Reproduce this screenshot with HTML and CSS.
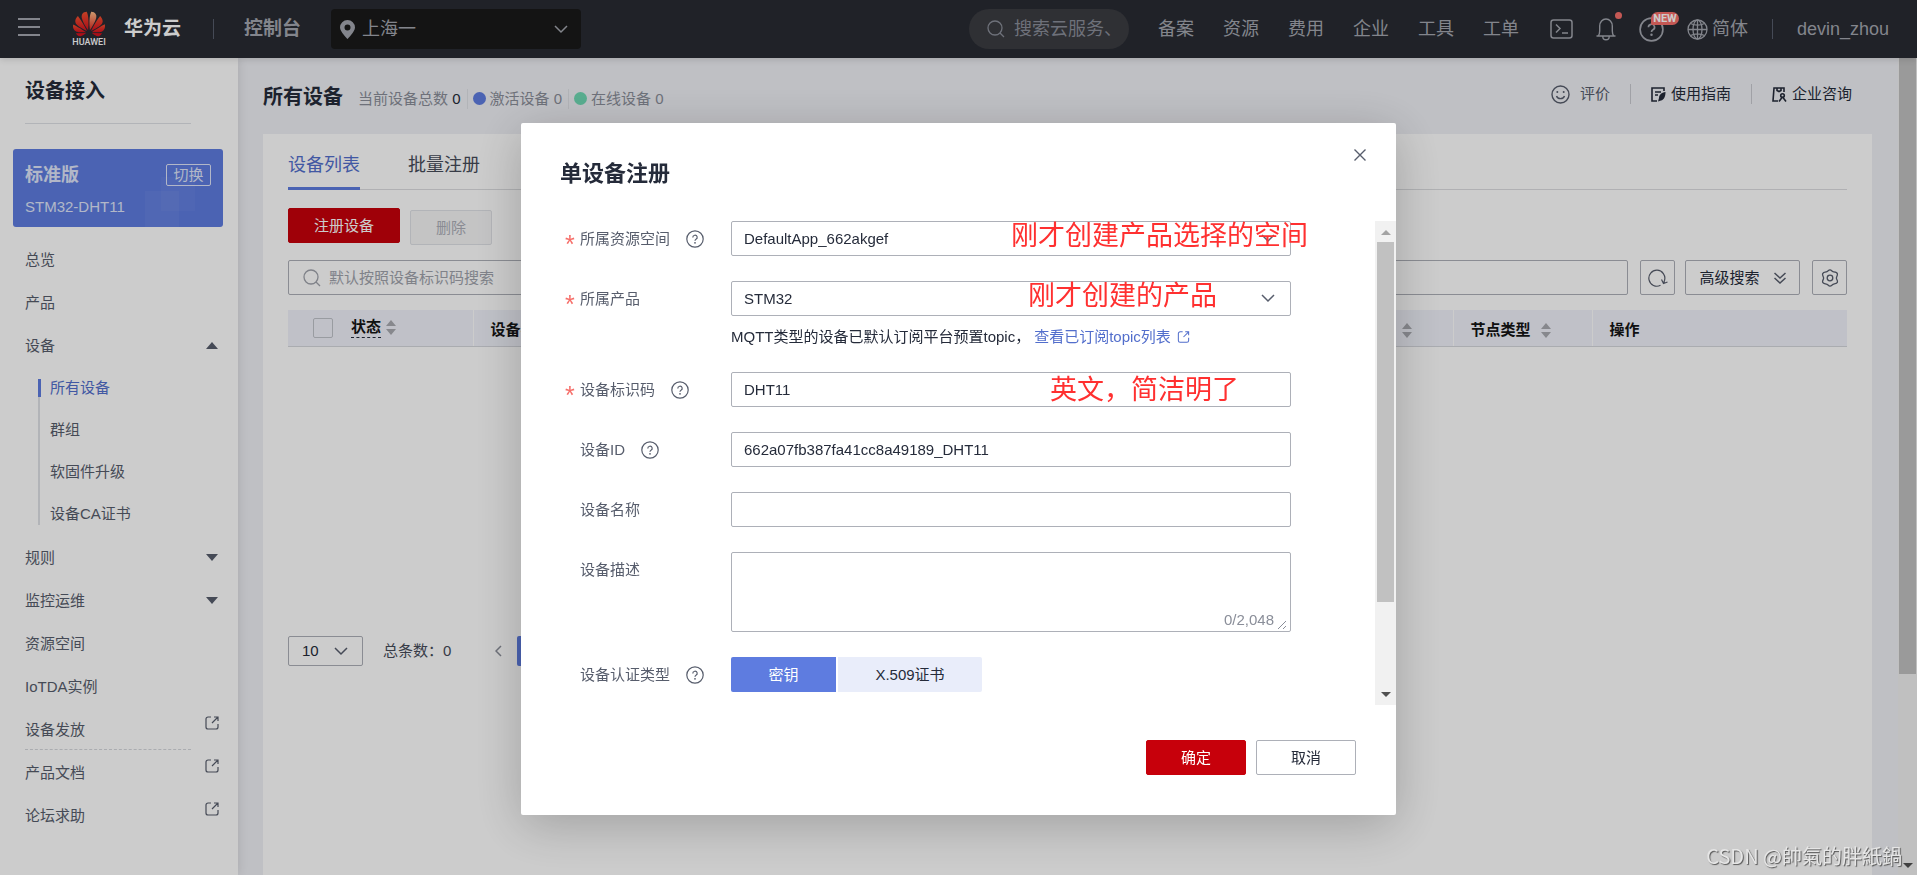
FILE: index.html
```html
<!DOCTYPE html>
<html lang="zh-CN">
<head>
<meta charset="utf-8">
<title>设备接入 - 所有设备</title>
<link rel="stylesheet" href="styles.css">
</head>
<body>
<svg class="defs" aria-hidden="true">
  <symbol id="i-chevron" viewBox="0 0 14 9"><path d="M1 1l6 6 6-6" fill="none" stroke="currentColor" stroke-width="1.5"/></symbol>
  <symbol id="i-search" viewBox="0 0 18 18"><g fill="none" stroke="currentColor" stroke-width="1.3"><circle cx="8" cy="8" r="7"/><path d="M13 13l4 4"/></g></symbol>
  <symbol id="i-help" viewBox="0 0 18 18"><g fill="none" stroke="currentColor" stroke-width="1.2"><circle cx="9" cy="9" r="8.2"/><path d="M6.8 7.4a2.2 2.1 0 1 1 3.2 1.8c-.7.4-1 .7-1 1.6"/></g><circle cx="9" cy="12.8" r=".9" fill="currentColor"/></symbol>
  <symbol id="i-ext" viewBox="0 0 14 14"><path d="M6 1H3a2 2 0 0 0-2 2v8a2 2 0 0 0 2 2h8a2 2 0 0 0 2-2V8M9 1h4v4M13 1L7 7" fill="none" stroke="currentColor" stroke-width="1.2"/></symbol>
  <symbol id="i-sort" viewBox="0 0 10 15"><path d="M5 0l5 6H0zM0 9h10l-5 6z" fill="currentColor"/></symbol>
  <symbol id="i-caret" viewBox="0 0 12 7"><path d="M0 0h12L6 7z" fill="currentColor"/></symbol>
  <symbol id="i-arrow" viewBox="0 0 10 5"><path d="M0 0h10L5 5z" fill="currentColor"/></symbol>
</svg>

<div class="app">
  <header class="topbar">
    <button class="icon-btn menu-btn" aria-label="菜单"><svg width="22" height="18" viewBox="0 0 22 18"><path d="M0 1h22M0 9h22M0 17h22" stroke="currentColor" stroke-width="2"/></svg></button>
    <a class="brand" href="#">
      <span class="logo">
        <svg width="32" height="26" viewBox="0 2.5 24 19" preserveAspectRatio="none">
          <defs><linearGradient id="petal" x1="0" y1="0" x2="0" y2="1"><stop offset="0" stop-color="#f4512f"/><stop offset="1" stop-color="#d4121f"/></linearGradient>
          <linearGradient id="petal-light" x1="0" y1="0" x2="0" y2="1"><stop offset="0" stop-color="#ffc08a"/><stop offset="1" stop-color="#e02a20"/></linearGradient></defs>
          <path fill="url(#petal)" d="M3.67 6.14S1.82 7.91 1.72 9.78v.35c.08 1.51 1.22 2.4 1.22 2.4 1.83 1.79 6.26 4.04 7.3 4.55 0 0 .06.03.1-.01l.02-.04v-.04C7.52 10.8 3.67 6.14 3.67 6.14z"/>
          <path fill="#d4121f" d="M9.65 18.6c-.02-.08-.1-.08-.1-.08l-7.38.26c.8 1.43 2.15 2.53 3.56 2.2.96-.25 3.16-1.78 3.88-2.3.06-.05.04-.09.04-.09z"/>
          <path fill="url(#petal)" d="M9.73 17.82C6.49 15.63.21 12.28.21 12.28c-.15.46-.2.9-.21 1.3v.07c0 1.07.4 1.82.4 1.82.8 1.69 2.34 2.2 2.34 2.2.7.3 1.4.31 1.4.31h5.54c.05 0 .08-.05.08-.05z"/>
          <path fill="url(#petal)" d="M9.06 3.19a3.42 3.42 0 0 0-2.57 3.15v.41c.03.6.16 1.05.16 1.05.66 2.9 3.86 7.65 4.55 8.65.05.05.1.03.1.03a.1.1 0 0 0 .06-.1c1.06-10.6-1.11-13.42-1.11-13.42-.32.02-1.19.23-1.19.23z"/>
          <path fill="url(#petal-light)" d="M17.36 5.46s-.49-1.8-2.44-2.28c0 0-.57-.14-1.17-.22 0 0-2.18 2.81-1.12 13.43.01.07.06.08.06.08.07.03.1-.03.1-.03.72-1.03 3.9-5.76 4.55-8.64 0 0 .36-1.4.02-2.34z"/>
          <path fill="#d4121f" d="M14.44 18.53s-.07 0-.09.05c0 0-.01.07.03.1.7.51 2.85 2 3.88 2.3 0 0 .16.05.43.06h.14c.69-.02 1.9-.37 3-2.26z"/>
          <path fill="url(#petal)" d="M22.27 10.12c.14-2.06-1.94-3.98-1.94-3.98s-3.85 4.66-6.67 10.8c0 0-.03.08.02.13h.1c1.06-.53 5.46-2.77 7.28-4.54 0 0 1.15-.93 1.21-2.41z"/>
          <path fill="url(#petal)" d="M23.79 12.26s-6.28 3.37-9.52 5.55c0 0-.05.04-.03.11 0 0 .03.06.07.06 1.16 0 5.56 0 5.67-.02 0 0 .57-.02 1.27-.29 0 0 1.56-.5 2.37-2.27 0 0 .73-1.45.17-3.14z"/>
        </svg>
        <span class="logo-word">HUAWEI</span>
      </span>
      <span class="brand-name">华为云</span>
    </a>
    <span class="bar-rule rule-brand"></span>
    <a class="console" href="#">控制台</a>
    <button class="region">
      <svg width="15" height="19" viewBox="0 0 15 19"><path fill-rule="evenodd" fill="currentColor" d="M7.500 0a7.500 7.500 0 0 0-7.500 7.500C0 11.500 7.500 19 7.500 19S15 11.500 15 7.500A7.500 7.500 0 0 0 7.500 0zm0 4.500a3 3 0 1 1 0 6 3 3 0 0 1 0-6z"/></svg>
      <span class="region-name">上海一</span>
      <svg width="14" height="9"><use href="#i-chevron"/></svg>
    </button>
    <label class="top-search">
      <svg width="18" height="18"><use href="#i-search"/></svg>
      <input type="text" placeholder="搜索云服务、" aria-label="搜索云服务">
    </label>
    <nav class="top-nav">
      <a href="#">备案</a><a href="#">资源</a><a href="#">费用</a><a href="#">企业</a><a href="#">工具</a><a href="#">工单</a>
    </nav>
    <div class="top-tools">
      <button class="icon-btn" aria-label="命令行"><svg width="23" height="20" viewBox="0 0 23 20"><g fill="none" stroke="currentColor" stroke-width="1.5"><rect x="1" y="1" width="21" height="18" rx="2.500"/><path d="M6 5.500l4 4-4 4M12 14h6"/></g></svg></button>
      <button class="icon-btn" aria-label="消息"><svg width="20" height="24" viewBox="0 0 20 24"><path d="M.5 19h19M2.200 19c1.200-1.500 1.500-3 1.500-5V9a6.300 7 0 0 1 12.600 0v5c0 2 .3 3.500 1.500 5M6.800 19.500a3.200 3.300 0 0 0 6.400 0" fill="none" stroke="currentColor" stroke-width="1.400"/></svg><span class="dot-badge"></span></button>
      <button class="icon-btn" aria-label="帮助"><svg width="25" height="25"><use href="#i-help"/></svg><span class="new-badge">NEW</span></button>
      <button class="lang"><svg width="21" height="21" viewBox="0 0 21 21"><g fill="none" stroke="currentColor" stroke-width="1.300"><circle cx="10.500" cy="10.500" r="9.500"/><ellipse cx="10.500" cy="10.500" rx="4.500" ry="9.500"/><path d="M1 10.500h19M10.500 1v19M3.500 4.500c4 2 10 2 14 0M3.500 16.500c4-2 10-2 14 0"/></g></svg>简体</button>
    </div>
    <span class="bar-rule rule-user"></span>
    <a class="user" href="#">devin_zhou</a>
  </header>

  <div class="body-row">
    <aside class="sidebar">
      <h2 class="side-title">设备接入</h2>
      <div class="edition">
        <div class="edition-top"><strong>标准版</strong><button class="switch">切换</button></div>
        <span class="edition-name">STM32-DHT11</span>
      </div>
      <nav class="side-nav">
        <a href="#">总览</a>
        <a href="#">产品</a>
        <a href="#">设备<svg class="flip" width="12" height="7"><use href="#i-caret"/></svg></a>
        <div class="sub-nav">
          <a class="current" href="#">所有设备</a>
          <a href="#">群组</a>
          <a href="#">软固件升级</a>
          <a href="#">设备CA证书</a>
        </div>
        <a href="#">规则<svg width="12" height="7"><use href="#i-caret"/></svg></a>
        <a href="#">监控运维<svg width="12" height="7"><use href="#i-caret"/></svg></a>
        <a href="#">资源空间</a>
        <a href="#">IoTDA实例</a>
        <a class="ext" href="#">设备发放<svg width="14" height="14"><use href="#i-ext"/></svg></a>
        <a class="ext after-rule" href="#">产品文档<svg width="14" height="14"><use href="#i-ext"/></svg></a>
        <a class="ext" href="#">论坛求助<svg width="14" height="14"><use href="#i-ext"/></svg></a>
      </nav>
    </aside>

    <main class="main">
      <div class="page-head">
        <h1>所有设备</h1>
        <div class="stats">
          <span>当前设备总数 <b>0</b></span>
          <span class="stat"><i class="dot active"></i>激活设备 0</span>
          <span class="stat"><i class="dot online"></i>在线设备 0</span>
        </div>
        <div class="head-links">
          <a class="rate" href="#"><svg width="19" height="19" viewBox="0 0 19 19"><g fill="none" stroke="currentColor" stroke-width="1.400"><circle cx="9.500" cy="9.500" r="8.500"/><path d="M5.500 11c1 3.500 7 3.500 8 0"/></g><circle cx="6.300" cy="7" r="1" fill="currentColor"/><circle cx="12.700" cy="7" r="1" fill="currentColor"/></svg>评价</a>
          <a href="#"><svg width="15" height="15" viewBox="0 0 15 15"><path d="M13 4V1H1v13h5M4 5h6M4 8h3" fill="none" stroke="currentColor" stroke-width="1.600"/><path d="M14.500 5c-4 .5-6.500 3-6.500 6l-1 3.500 3-1c3-.5 4.500-4 4.500-8.500z" fill="currentColor"/></svg>使用指南</a>
          <a href="#"><svg width="15" height="15" viewBox="0 0 15 15"><g fill="none" stroke="currentColor" stroke-width="1.600"><path d="M12 5V1H2L1 14h5M5 1.500v2l2 1 2-1v-2"/><circle cx="10.500" cy="8.500" r="1.800"/><path d="M7 14.500l3-4h1l3 4"/></g></svg>企业咨询</a>
        </div>
      </div>

      <section class="panel">
        <nav class="tabs"><a class="selected" href="#">设备列表</a><a href="#">批量注册</a></nav>
        <div class="actions"><button class="btn primary register">注册设备</button><button class="btn delete" disabled>删除</button></div>
        <div class="filters">
          <label class="filter-box"><svg width="18" height="18"><use href="#i-search"/></svg><input type="text" placeholder="默认按照设备标识码搜索" aria-label="搜索设备"></label>
          <button class="btn square" aria-label="刷新"><svg width="20" height="18" viewBox="0 0 20 18"><path d="M12.500 16.300A8 8 0 1 1 16.500 11.500L15.500 14.500M13.500 10.500l2 4 4-1.500" fill="none" stroke="currentColor" stroke-width="1.200"/></svg></button>
          <button class="btn advanced">高级搜索<svg width="12" height="12" viewBox="0 0 12 12"><path d="M.5 1L6 6l5.500-5M.5 6L6 11l5.500-5" fill="none" stroke="currentColor" stroke-width="1.500"/></svg></button>
          <button class="btn square" aria-label="设置"><svg width="18" height="18" viewBox="0 0 18 18"><g fill="none" stroke="currentColor" stroke-width="1.300"><path d="M9 .9c1.600 0 2.200 1.900 3.700 2s3.400.2 3.700 1.900-1 2.700-1 4.200 1.500 2.700 1 4.200-2.400 1.600-3.700 1.900S10.600 17.100 9 17.100s-2.200-1.800-3.700-2-3.300-.4-3.700-1.900 1-2.700 1-4.200-1.500-2.700-1-4.200 2.400-1.700 3.700-1.900S7.400.9 9 .9z"/><circle cx="9" cy="9" r="2.800"/></g></svg></button>
        </div>
        <table class="devices">
          <colgroup><col class="c-state"><col><col><col><col class="c-mid"><col class="c-mid"><col class="c-ops"></colgroup>
          <thead><tr>
            <th class="first"><div class="th"><input type="checkbox" aria-label="全选"><span class="hinted">状态</span><svg width="10" height="15"><use href="#i-sort"/></svg></div></th>
            <th>设备名称</th>
            <th></th>
            <th></th>
            <th><div class="th">所属产品<svg width="10" height="15"><use href="#i-sort"/></svg></div></th>
            <th><div class="th">节点类型<svg width="10" height="15"><use href="#i-sort"/></svg></div></th>
            <th>操作</th>
          </tr></thead>
        </table>
        <div class="pager">
          <div class="select-wrap page-size"><select aria-label="每页条数"><option>10</option></select><svg width="14" height="9"><use href="#i-chevron"/></svg></div>
          <span class="total">总条数：0</span>
          <button class="prev" aria-label="上一页"><svg width="7" height="12" viewBox="0 0 7 12"><path d="M6 1L1 6l5 5" fill="none" stroke="currentColor" stroke-width="1.500"/></svg></button>
          <button class="page-no" aria-label="第1页">1</button>
        </div>
      </section>
    </main>

    <div class="scrollbar page-scroll" aria-hidden="true">
      <div class="thumb" style="height:76%"></div>
      <svg width="10" height="5"><use href="#i-arrow"/></svg>
    </div>
  </div>
</div>

<div class="backdrop">
  <section class="dialog" role="dialog" aria-modal="true" aria-labelledby="dlg-title">
    <header class="dialog-head">
      <h2 id="dlg-title">单设备注册</h2>
      <button class="close" aria-label="关闭"><svg width="12" height="12" viewBox="0 0 12 12"><path d="M.5.500l11 11M11.500.500l-11 11" stroke="currentColor" stroke-width="1.400"/></svg></button>
    </header>
    <div class="dialog-body">
      <form class="form">
        <div class="row">
          <div class="label"><span class="req">*</span><label for="f-space">所属资源空间</label><svg width="18" height="18"><use href="#i-help"/></svg></div>
          <div class="field"><div class="select-wrap"><select id="f-space"><option>DefaultApp_662akgef</option></select><svg width="14" height="9"><use href="#i-chevron"/></svg></div><span class="note note-space">刚才创建产品选择的空间</span></div>
        </div>
        <div class="row">
          <div class="label"><span class="req">*</span><label for="f-product">所属产品</label></div>
          <div class="field"><div class="select-wrap"><select id="f-product"><option>STM32</option></select><svg width="14" height="9"><use href="#i-chevron"/></svg></div><span class="note note-product">刚才创建的产品</span>
            <p class="hint">MQTT类型的设备已默认订阅平台预置topic， <a href="#">查看已订阅topic列表<svg width="13" height="12"><use href="#i-ext"/></svg></a></p></div>
        </div>
        <div class="row">
          <div class="label"><span class="req">*</span><label for="f-code">设备标识码</label><svg width="18" height="18"><use href="#i-help"/></svg></div>
          <div class="field"><input id="f-code" type="text" value="DHT11"><span class="note note-code">英文，简洁明了</span></div>
        </div>
        <div class="row">
          <div class="label"><span class="req"></span><label for="f-id">设备ID</label><svg width="18" height="18"><use href="#i-help"/></svg></div>
          <div class="field"><input id="f-id" type="text" value="662a07fb387fa41cc8a49189_DHT11"></div>
        </div>
        <div class="row">
          <div class="label"><span class="req"></span><label for="f-name">设备名称</label></div>
          <div class="field"><input id="f-name" type="text"></div>
        </div>
        <div class="row">
          <div class="label"><span class="req"></span><label for="f-desc">设备描述</label></div>
          <div class="field"><textarea id="f-desc"></textarea><span class="counter">0/2,048<svg width="10" height="10" viewBox="0 0 10 10"><path d="M1 9l8-8M6 9l3-3" stroke="currentColor" fill="none"/></svg></span></div>
        </div>
        <div class="row">
          <div class="label"><span class="req"></span><span>设备认证类型</span><svg width="18" height="18"><use href="#i-help"/></svg></div>
          <div class="field segments"><button type="button" class="on">密钥</button><button type="button" class="off">X.509证书</button></div>
        </div>
      </form>
      <div class="scrollbar dialog-scroll" aria-hidden="true">
        <svg class="flip" width="10" height="5"><use href="#i-arrow"/></svg>
        <div class="thumb" style="height:77%"></div>
        <svg width="10" height="5"><use href="#i-arrow"/></svg>
      </div>
    </div>
    <footer class="dialog-foot"><button class="btn primary">确定</button><button class="btn">取消</button></footer>
  </section>
</div>
<span class="watermark">CSDN @帥氣的胖紙鍋</span>
</body>
</html>
```

FILE: styles.css
```css
* { box-sizing: border-box; }

:root {
  --ink: #252b3a;
  --text: #575d6c;
  --line: #adb0b8;
  --rule: #dfe1e6;
  --blue: #5e7ce0;
  --red: #c7000b;
}

body {
  margin: 0;
  overflow: hidden;
  color: var(--ink);
  font: 15px/20px "Liberation Sans", "Noto Sans CJK SC", sans-serif;
}

h1, h2, p { margin: 0; }
a { color: inherit; text-decoration: none; }
svg { display: block; flex: none; }
button, input, select, textarea { font: inherit; color: inherit; }
button { margin: 0; padding: 0; border: 0; background: none; white-space: nowrap; }
input::placeholder { color: inherit; opacity: 1; }
.defs { position: absolute; width: 0; height: 0; }
.flip { transform: rotate(180deg); }

.app { display: flex; flex-direction: column; height: 100vh; }

/* Top bar */
.topbar {
  display: flex;
  align-items: center;
  flex: none;
  height: 58px;
  padding: 0 28px 0 18px;
  background: #282b33;
  color: #a4a7af;
  font-size: 18px;
  line-height: 24px;
  white-space: nowrap;
  box-shadow: 0 2px 6px rgba(0, 0, 0, .12);
  z-index: 2;
}
.topbar > * { flex: none; }
.icon-btn { position: relative; display: flex; }
.menu-btn { margin-right: 33px; padding-bottom: 4px; }
.brand { display: flex; align-items: center; gap: 19px; color: #fff; }
.logo { display: flex; flex-direction: column; align-items: center; width: 32px; }
.logo-word { font: 500 9px/10px Roboto, sans-serif; }
.brand-name { font-size: 19px; font-weight: bold; }
.bar-rule { width: 1px; height: 20px; background: #575d6c; }
.rule-brand { margin: 0 30px 0 32px; }
.console { font-size: 19px; font-weight: bold; }
.region {
  display: flex;
  align-items: center;
  width: 250px;
  height: 40px;
  margin-left: 30px;
  padding: 0 13px 0 9px;
  border-radius: 4px;
  background: #191919;
}
.region-name { flex: 1; padding-left: 7px; text-align: left; }
.top-search {
  display: flex;
  align-items: center;
  gap: 9px;
  width: 160px;
  height: 40px;
  margin-left: auto;
  padding: 0 18px;
  border-radius: 20px;
  background: #3b3c41;
  color: #8a8e99;
}
.top-search input { flex: 1; min-width: 0; padding: 0; border: 0; outline: 0; background: none; }
.top-nav { display: flex; gap: 29px; margin-left: 29px; }
.top-tools { display: flex; align-items: center; gap: 23px; margin-left: 31px; }
.lang { display: flex; align-items: center; gap: 4px; }
.dot-badge { position: absolute; top: -5px; right: -6px; width: 7px; height: 7px; border-radius: 50%; background: #f66f6a; }
.new-badge {
  position: absolute;
  top: -5px;
  left: 12px;
  width: 28px;
  border-radius: 7px 7px 7px 2px;
  background: #f66f6a;
  color: #fff;
  font: 700 11px/13px Roboto, sans-serif;
  text-align: center;
}
.rule-user { margin: 0 24px 0 24px; }

.body-row { display: flex; flex: 1; min-height: 0; background: #eff0f5; }

/* Sidebar */
.sidebar { flex: none; width: 238px; padding: 21px 15px 0 13px; background: #fff; box-shadow: 0 0 10px rgba(0, 0, 0, .12); }
.side-title { margin: 0 32px 25px 12px; padding-bottom: 19px; border-bottom: 1px solid var(--rule); font-size: 20px; line-height: 25px; }
.edition {
  display: flex;
  flex-direction: column;
  gap: 11px;
  height: 78px;
  padding: 15px 12px 0;
  border-radius: 3px;
  background:
    linear-gradient(rgba(255, 255, 255, .04), rgba(255, 255, 255, .04)) 132px 42px / 34px 36px no-repeat,
    linear-gradient(rgba(255, 255, 255, .03), rgba(255, 255, 255, .03)) 148px 28px / 34px 34px no-repeat,
    var(--blue);
  color: #dfe5fa;
}
.edition-top { display: flex; justify-content: space-between; align-items: center; font-size: 18px; line-height: 22px; }
.switch { width: 45px; height: 22px; border: 1px solid #dfe5fa; border-radius: 2px; font-size: 15px; line-height: 20px; }
.side-nav { display: flex; flex-direction: column; margin-top: 11px; padding: 0 4px 0 12px; color: var(--text); }
.side-nav > a { position: relative; display: flex; align-items: center; justify-content: space-between; height: 43px; }
.side-nav > a svg { margin-right: 1px; }
.side-nav > .ext svg { margin: 0 0 14px; }
.side-nav > .after-rule::before {
  content: "";
  position: absolute;
  top: -2px;
  left: 0;
  right: 28px;
  border-top: 1px dashed #d5d7dc;
}
.sub-nav { display: flex; flex-direction: column; margin-left: 13px; padding-bottom: 1px; background: linear-gradient(var(--rule), var(--rule)) 0 12px / 2px 146px no-repeat; }
.sub-nav a { display: flex; align-items: center; height: 42px; padding-left: 12px; }
.sub-nav .current { background: linear-gradient(var(--blue), var(--blue)) 0 12px / 3px 18px no-repeat; color: #526ecc; }

/* Page head */
.main { flex: 1; min-width: 0; display: flex; flex-direction: column; padding: 0 26px 0 25px; }
.page-head { display: flex; align-items: center; flex: none; height: 76px; padding-top: 2px; }
.page-head h1 { font-size: 20px; line-height: 26px; }
.stats { display: flex; margin: 3px 0 0 15px; color: #8a8e99; }
.stats b { color: var(--ink); font-weight: normal; }
.stat { display: flex; align-items: center; gap: 4px; margin-left: 6px; padding-left: 5px; border-left: 1px solid var(--rule); }
.dot { width: 13px; height: 13px; border-radius: 50%; }
.dot.active { background: var(--blue); }
.dot.online { background: #6fd9b4; }
.head-links { display: flex; margin: 0 20px 6px auto; }
.head-links a { display: flex; align-items: center; gap: 5px; }
.head-links a + a { margin-left: 20px; padding-left: 20px; border-left: 1px solid #c8cad0; }
.head-links .rate { gap: 10px; color: var(--text); }

/* Panel */
.panel { flex: 1; padding: 0 25px; background: #fff; }
.tabs { display: flex; gap: 48px; height: 56px; border-bottom: 1px solid #dcdde0; font-size: 18px; line-height: 24px; color: #464c59; }
.tabs a { height: 56px; padding-top: 19px; }
.tabs .selected { border-bottom: 3px solid var(--blue); color: #526ecc; }
.actions { display: flex; align-items: flex-start; gap: 10px; margin-top: 18px; }
.btn {
  display: flex;
  align-items: center;
  justify-content: center;
  width: 100px;
  height: 35px;
  border: 1px solid var(--line);
  border-radius: 2px;
  line-height: 20px;
}
.btn.primary { border-color: var(--red); background: var(--red); color: #fff; }
.btn.register { width: 112px; }
.btn.delete { width: 82px; margin-top: 2px; border-color: var(--rule); background: #f5f5f6; color: #adb0b8; }
.filters { display: flex; gap: 12px; margin-top: 15px; }
.filter-box { display: flex; align-items: center; gap: 8px; flex: 1; height: 35px; padding: 0 14px; border: 1px solid var(--line); border-radius: 2px; color: #a0a3ac; }
.filter-box input { flex: 1; min-width: 0; padding: 0; border: 0; outline: 0; background: none; }
.btn.square { width: 35px; color: var(--text); }
.btn.advanced { width: 115px; gap: 14px; margin-left: -2px; }
.btn.advanced svg { color: var(--text); }

.devices { width: 100%; margin-top: 15px; border-collapse: collapse; table-layout: fixed; }
.devices th { height: 36px; padding: 5px 0 0 17px; border-bottom: 1px solid #d5d7dd; border-left: 1px solid #fff; background: #f0f2fa; color: #151515; text-align: left; line-height: 20px; }
.devices th.first { padding: 0 0 0 25px; border-left: 0; }
.th { display: flex; align-items: center; gap: 10px; }
.first .th { gap: 5px; }
.th svg { color: #a9abb1; }
.th input { appearance: none; width: 20px; height: 20px; margin: 0 13px 0 0; border: 1px solid #c0c3ca; border-radius: 2px; background: none; }
.hinted { border-bottom: 1px dashed #252b3a; }
.c-state { width: 185px; }
.c-mid { width: 139px; }
.c-ops { width: 255px; }

.pager { display: flex; align-items: center; margin-top: 289px; }
.total { margin-left: 20px; color: #464c59; }
.prev { margin-left: 44px; color: #8a8e99; }
.page-no { width: 30px; height: 30px; margin-left: 15px; border-radius: 2px; background: var(--blue); color: #fff; }

.select-wrap { position: relative; }
.select-wrap select { appearance: none; display: block; width: 100%; height: 35px; padding: 0 12px; border: 1px solid var(--line); border-radius: 2px; background: none; }
.select-wrap svg { position: absolute; top: 13px; right: 16px; color: var(--text); pointer-events: none; }
.page-size { width: 75px; }
.page-size select { height: 30px; padding-left: 13px; }
.page-size svg { top: 11px; right: 15px; }

/* Scrollbars */
.scrollbar { display: flex; flex-direction: column; align-items: center; flex: none; background: #f1f1f1; color: #505050; }
.thumb { flex: none; width: 17px; background: #c1c1c1; }
.page-scroll { width: 19px; justify-content: space-between; padding-bottom: 7px; }
.dialog-scroll { width: 21px; padding: 9px 0 8px; }
.dialog-scroll .thumb { margin: 7px 0 auto; }
.dialog-scroll .flip { color: #a3a3a3; }

/* Dialog */
.backdrop { position: fixed; inset: 0; display: flex; align-items: flex-start; justify-content: center; padding-top: 123px; background: rgba(0, 0, 0, .2); z-index: 10; }
.dialog { width: 875px; max-width: 100%; border-radius: 2px; background: #fff; box-shadow: 0 10px 50px rgba(0, 0, 0, .22); }
.dialog-head { display: flex; justify-content: space-between; align-items: flex-start; padding: 0 30px 0 39px; }
.dialog-head h2 { padding: 36px 0 32px; font-size: 22px; line-height: 30px; }
.close { margin-top: 26px; color: var(--text); }
.dialog-body { display: flex; justify-content: space-between; height: calc(100vh - 391px); overflow: hidden; }
.form { display: flex; flex-direction: column; gap: 25px; flex: 1; padding: 0 84px 0 39px; }
.row { display: flex; align-items: flex-start; }
.label { display: flex; align-items: center; flex: none; width: 171px; height: 35px; padding-left: 5px; color: var(--text); }
.label svg { margin-left: 16px; }
.req { width: 15px; padding-top: 11px; color: #f66f6a; font-size: 25px; line-height: 25px; }
.field { position: relative; flex: 1; min-width: 0; }
.field > input, .field textarea { display: block; width: 100%; height: 35px; padding: 0 12px; border: 1px solid var(--line); border-radius: 2px; outline: 0; background: none; }
.field textarea { height: 80px; resize: none; }
.counter { position: absolute; right: 4px; bottom: 2px; display: flex; align-items: flex-end; gap: 3px; color: #8a8e99; }
.hint { display: flex; gap: 4px; height: 31px; padding-top: 11px; white-space: nowrap; }
.hint a { display: flex; align-items: center; gap: 6px; color: #526ecc; }
.note { position: absolute; top: 1px; color: #ff3030; font-size: 27px; line-height: 28px; white-space: nowrap; pointer-events: none; }
.note-space { left: 280px; }
.note-product { left: 297px; }
.note-code { top: 4px; left: 319px; }
.segments { display: flex; gap: 2px; }
.segments button { height: 35px; }
.segments .on { width: 105px; border-radius: 2px 0 0 2px; background: var(--blue); color: #fff; }
.segments .off { width: 144px; border-radius: 0 2px 2px 0; background: #e9edfa; }
.dialog-foot { display: flex; justify-content: flex-end; gap: 10px; padding: 35px 40px 40px; }

.watermark {
  position: fixed;
  right: 15px;
  bottom: 7px;
  z-index: 20;
  color: #e6e6e6;
  font: 20px/24px "Noto Sans CJK TC", sans-serif;
  text-shadow: 1px 1px 1px #555;
}
```
